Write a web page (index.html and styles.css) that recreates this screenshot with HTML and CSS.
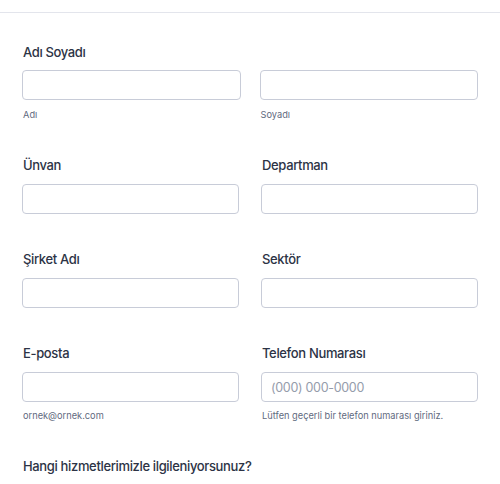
FILE: index.html
```html
<!DOCTYPE html>
<html lang="tr">
<head>
<meta charset="utf-8">
<link rel="stylesheet" href="styles.css">
</head>
<body>
<div class="topline"></div>
<form class="form">
  <div class="field name-field">
    <div class="label">Adı Soyadı</div>
    <div class="row row-name">
      <div class="col">
        <input class="input" type="text">
        <div class="sub">Adı</div>
      </div>
      <div class="col">
        <input class="input" type="text">
        <div class="sub">Soyadı</div>
      </div>
    </div>
  </div>

  <div class="row row-pair gap-after">
    <div class="col">
      <div class="label">Ünvan</div>
      <input class="input" type="text">
    </div>
    <div class="col">
      <div class="label">Departman</div>
      <input class="input" type="text">
    </div>
  </div>

  <div class="row row-pair gap-after">
    <div class="col">
      <div class="label">Şirket Adı</div>
      <input class="input" type="text">
    </div>
    <div class="col">
      <div class="label">Sektör</div>
      <input class="input" type="text">
    </div>
  </div>

  <div class="row row-pair">
    <div class="col">
      <div class="label">E-posta</div>
      <input class="input" type="text">
      <div class="sub sub-tight">ornek@ornek.com</div>
    </div>
    <div class="col">
      <div class="label">Telefon Numarası</div>
      <input class="input" type="text" placeholder="(000) 000-0000">
      <div class="sub sub-tight">Lütfen geçerli bir telefon numarası giriniz.</div>
    </div>
  </div>

  <div class="label last">Hangi hizmetlerimizle ilgileniyorsunuz?</div>
</form>
</body>
</html>
```

FILE: styles.css
```css
* { box-sizing: border-box; }
html, body { margin: 0; padding: 0; background: #fff; }
body {
  font-family: Inter, "Noto Sans", sans-serif;
  color: #2c3345;
  width: 500px;
  height: 484px;
  overflow: hidden;
}
.topline {
  height: 0;
  margin-top: 12px;
  border-top: 1px solid #e3e5ec;
}
.form {
  padding: 29px 22px 0 22px;
}
.label {
  font-size: 13px;
  line-height: 20px;
  font-weight: 500;
  letter-spacing: -0.35px;
  color: #2c3345;
  padding-left: 1px;
}
.name-field .label { margin-bottom: 8px; }
.row {
  display: flex;
}
.row-name { gap: 19px; }
.row-pair { gap: 22px; }
.name-field { margin-bottom: 33px; }
.gap-after { margin-bottom: 35px; }
.col {
  flex: 1 1 0;
  min-width: 0;
}
.row-pair .label { margin-bottom: 9px; }
.input {
  display: block;
  width: 100%;
  height: 30px;
  border: 1px solid #c8ccd8;
  border-radius: 4px;
  background: #fff;
  padding: 0 9px;
  font-family: Inter, "Noto Sans", sans-serif;
  font-size: 12.5px;
  letter-spacing: -0.3px;
  color: #2c3345;
  outline: none;
  margin: 0;
}
.input::placeholder { color: #959cab; }
.sub {
  margin-top: 8px;
  font-size: 9.25px;
  line-height: 14px;
  color: #5f6a80;
  padding-left: 1px;
}
.sub-tight { margin-top: 7px; }
.last { margin-top: 33px; }
```
